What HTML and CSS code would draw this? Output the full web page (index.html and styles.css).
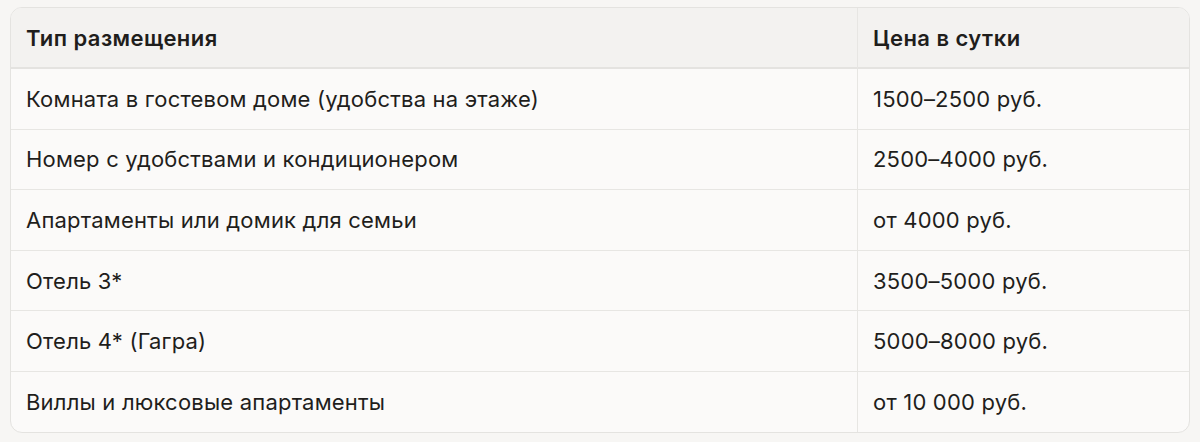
FILE: index.html
```html
<!DOCTYPE html>
<html lang="ru">
<head>
<meta charset="utf-8">
<link rel="stylesheet" href="styles.css">
</head>
<body>
<div class="wrap">
  <table class="tbl">
    <thead>
      <tr><th class="c1">Тип размещения</th><th>Цена в сутки</th></tr>
    </thead>
    <tbody>
      <tr><td class="c1">Комната в гостевом доме (удобства на этаже)</td><td>1500–2500 руб.</td></tr>
      <tr><td class="c1">Номер с удобствами и кондиционером</td><td>2500–4000 руб.</td></tr>
      <tr><td class="c1">Апартаменты или домик для семьи</td><td>от 4000 руб.</td></tr>
      <tr><td class="c1">Отель 3*</td><td>3500–5000 руб.</td></tr>
      <tr><td class="c1">Отель 4* (Гагра)</td><td>5000–8000 руб.</td></tr>
      <tr><td class="c1">Виллы и люксовые апартаменты</td><td>от 10 000 руб.</td></tr>
    </tbody>
  </table>
</div>
</body>
</html>
```
FILE: styles.css
```css
html, body { margin: 0; padding: 0; background: #f7f6f4; }
body { font-family: Inter, "Noto Sans", sans-serif; color: #1f1e1c; }
.wrap { padding: 7px 10px 0 10px; }
.tbl {
  width: 1180px;
  border-collapse: separate;
  border-spacing: 0;
  border: 1px solid #e4e3e0;
  border-radius: 12px;
  overflow: hidden;
  background: #fbfaf9;
  font-size: 22px;
  letter-spacing: 0.2px;
}
.tbl th, .tbl td {
  text-align: left;
  padding: 0 15px;
  height: 60.6px;
  box-sizing: border-box;
  border-bottom: 1px solid #e7e6e3;
}
.tbl tbody tr:last-child td { border-bottom: none; height: 60px; }
.tbl th { height: 61px; background: #f3f2f0; font-weight: 600; letter-spacing: 0.45px; border-bottom: 2px solid #e4e3e0; }
.tbl .c1 { width: 847px; border-right: 1px solid #e7e6e3; }
```
